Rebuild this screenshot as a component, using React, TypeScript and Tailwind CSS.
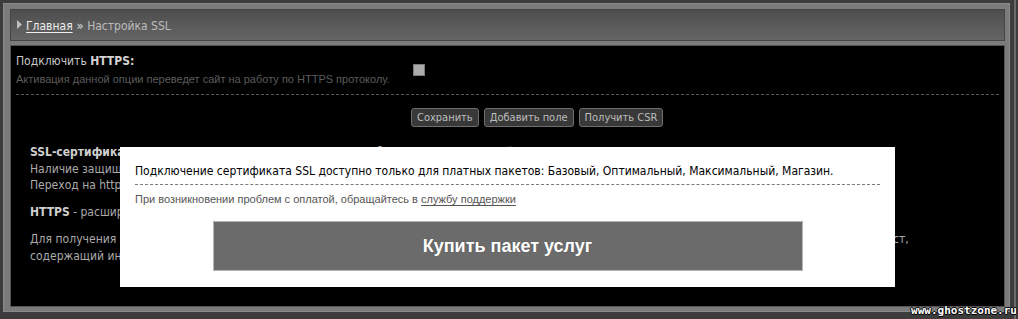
const font = { fontFamily: '"DejaVu Sans Condensed", "Liberation Sans", Arial, sans-serif' };
const arial = { fontFamily: '"Liberation Sans", Arial, sans-serif' };

const actions = ["Сохранить", "Добавить поле", "Получить CSR"] as const;

function Breadcrumb() {
  return (
    <div className="flex h-[32px] items-center gap-[4px] border border-[#454545] bg-gradient-to-b from-[#4e4e4e] to-[#656565] pl-[6px] text-[12px]">
      <svg width="5" height="9" viewBox="0 0 5 9" className="mb-[1px]">
        <path d="M0 0 L5 4.5 L0 9 Z" fill="#bdbdbd" />
      </svg>
      <span className="mt-[1px]">
        <a className="text-[#eeeeee] underline underline-offset-2">Главная</a>
        <span className="font-bold text-[#c4c4c4]"> » </span>
        <span className="text-[#bcbcbc]">Настройка SSL</span>
      </span>
    </div>
  );
}

function HttpsOption() {
  return (
    <div className="flex items-start">
      <div className="w-[397px]">
        <div className="text-[12px] leading-[16px] text-[#c8c8c8]">
          Подключить <b className="text-[#d4d4d4]">HTTPS:</b>
        </div>
        <div className="mt-[3px] text-[11px] leading-[14px] text-[#5c5c5c]" style={arial}>
          Активация данной опции переведет сайт на работу по HTTPS протоколу.
        </div>
      </div>
      <div className="mt-[11px] h-[12px] w-[12px] border border-[#7a7a7a] bg-[#ababab]" />
    </div>
  );
}

function Info() {
  return (
    <div className="mt-[17px] whitespace-nowrap pl-[14px] text-[12px] leading-[16.5px] text-[#ababab]">
      <p>
        <b className="text-[#cfcfcf]">SSL-сертификат</b> - это уникальная цифровая подпись для обеспечения защиты сайта.
        <br />
        Наличие защищенного соединения повышает доверие посетителей к вашему сайту.
        <br />
        Переход на https:// выполняется автоматически после установки сертификата.
      </p>
      <p className="mt-[10px]">
        <b className="text-[#cfcfcf]">HTTPS</b> - расширение протокола HTTP, поддерживающее шифрование данных.
      </p>
      <p className="mt-[11px]">
        <span className="tracking-[0.045px]">
          Для получения SSL-сертификата необходимо сгенерировать запрос на подпись сертификата (CSR), а затем отправить в удостоверяющий центр текст,
        </span>
        <br />
        содержащий информацию о вашем домене и организации.
      </p>
    </div>
  );
}

function PaidModal() {
  return (
    <div className="absolute left-[120px] top-[147px] w-[775px] bg-white px-[15px] pt-[16px] pb-[16px]">
      <div className="border-b border-dashed border-[#7a7a7a] pb-[5px] text-[12px] leading-[16px] text-black">
        Подключение сертификата SSL доступно только для платных пакетов: Базовый, Оптимальный, Максимальный, Магазин.
      </div>
      <div className="mt-[7px] text-[11px] leading-[14px] text-[#555555]" style={arial}>
        При возникновении проблем с оплатой, обращайтесь в{" "}
        <a className="text-[#555555] underline underline-offset-2">службу поддержки</a>
      </div>
      <button
        className="mx-auto mt-[15px] flex h-[50px] w-[590px] items-center justify-center border border-[#b5b5b5] bg-[#6b6b6b] text-[18px] font-bold text-white [text-shadow:0_0_1px_#555]"
        style={arial}
      >
        Купить пакет услуг
      </button>
    </div>
  );
}

export default function App() {
  return (
    <div className="relative h-[319px] w-[1018px] overflow-hidden bg-[#3c3c3c] pt-[3px] pl-[3px]" style={font}>
      <div className="flex h-[309px] w-[1007px] flex-col gap-[4px] border border-[#8a8a8a] bg-[#7b7b7b] pt-[5px] pr-[4px] pb-[4px] pl-[6px]">
        <Breadcrumb />
        <div className="flex-1 overflow-hidden border border-[#555555] bg-black pt-[7px] pr-[5px] pl-[5px]">
          <HttpsOption />
          <div className="mt-[8px] border-t border-dashed border-[#5a5a5a]" />
          <div className="mt-[13px] flex gap-[5px] pl-[395px]">
            {actions.map((label) => (
              <button
                key={label}
                className="h-[19px] rounded-[3px] border border-[#6e6e6e] bg-[#383838] px-[5px] text-[11px] leading-[17px] text-[#bdbdbd]"
              >
                {label}
              </button>
            ))}
          </div>
          <Info />
        </div>
      </div>
      <div className="absolute top-0 right-[2px] h-full w-[2px] bg-[#6a6a6a]" />
      <PaidModal />
      <div
        className="absolute right-[1px] bottom-[2px] text-[11px] font-bold leading-[13px] text-white [text-shadow:1px_0_0_#000,-1px_0_0_#000,0_1px_0_#000,0_-1px_0_#000]"
        style={{ fontFamily: '"DejaVu Sans Mono", monospace' }}
      >
        www.ghostzone.ru
      </div>
    </div>
  );
}
